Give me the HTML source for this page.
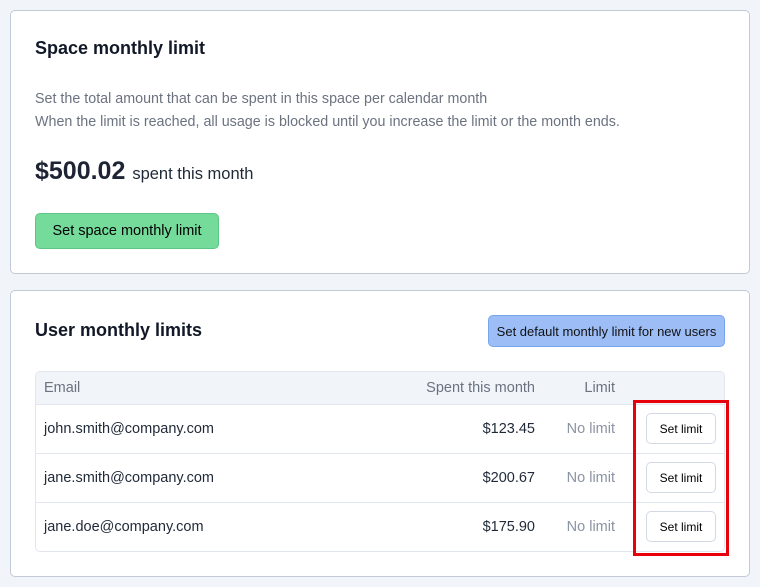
<!DOCTYPE html>
<html><head><style>
*{box-sizing:border-box;margin:0;padding:0}
body{width:760px;height:587px;background:#f1f4f9;font-family:"Liberation Sans",sans-serif;position:relative;overflow:hidden;color:#111827}
.card{position:absolute;left:10px;width:740px;background:#fff;border:1px solid #c3cad7;border-radius:5px}
.abs{position:absolute;white-space:nowrap}
.btn{position:absolute;border-radius:5px;font-size:13px;display:flex;align-items:center;justify-content:center}
.sl{left:646px;width:70px;height:31px;border:1px solid #d3d9e4;background:#fff;font-size:12px;color:#000}
.row{position:absolute;left:35px;width:690px;border-top:1px solid #e2e6ee;height:49px}
.e{font-size:14.5px;color:#1f2937}
.m{font-size:14.5px;color:#1f2937}
.n{font-size:14.5px;color:#8a93a3}
</style></head><body>
<div class="card" style="top:10px;height:264px"></div>
<div class="abs" style="left:35px;top:38px;font-size:18px;font-weight:bold">Space monthly limit</div>
<div class="abs" style="left:35px;top:88px;font-size:14.3px;color:#6b7280;line-height:23px">Set the total amount that can be spent in this space per calendar month<br>When the limit is reached, all usage is blocked until you increase the limit or the month ends.</div>
<div class="abs" style="left:35px;top:157px;font-size:25px;font-weight:bold;color:#1e2433">$500.02 <span style="font-size:16.5px;font-weight:normal;color:#1f2937">spent this month</span></div>
<div class="btn" style="left:35px;top:213px;width:184px;height:36px;background:#74db9a;border:1px solid #5cc684;font-size:14.5px;color:#000">Set space monthly limit</div>

<div class="card" style="top:290px;height:287px"></div>
<div class="abs" style="left:35px;top:320px;font-size:18px;font-weight:bold">User monthly limits</div>
<div class="btn" style="left:488px;top:315px;width:237px;height:32px;background:#9cbdf6;border:1px solid #7aa3ee;font-size:13px;color:#111">Set default monthly limit for new users</div>

<div style="position:absolute;left:35px;top:371px;width:690px;height:181px;border:1px solid #e2e6ee;border-radius:5px;background:#fff"></div>
<div style="position:absolute;left:36px;top:372px;width:688px;height:32px;background:#f1f4f9;border-radius:4px 4px 0 0"></div>
<div class="abs n" style="left:44px;top:380px;color:#6b7280">Email</div>
<div class="abs n" style="right:225px;top:380px;color:#6b7280">Spent this month</div>
<div class="abs n" style="right:145px;top:380px;color:#6b7280">Limit</div>

<div class="row" style="top:404px"></div>
<div class="row" style="top:453px"></div>
<div class="row" style="top:502px"></div>

<div class="abs e" style="left:44px;top:421px">john.smith@company.com</div>
<div class="abs m" style="right:225px;top:421px">$123.45</div>
<div class="abs n" style="right:145px;top:421px">No limit</div>
<div class="btn sl" style="top:413px">Set limit</div>

<div class="abs e" style="left:44px;top:470px">jane.smith@company.com</div>
<div class="abs m" style="right:225px;top:470px">$200.67</div>
<div class="abs n" style="right:145px;top:470px">No limit</div>
<div class="btn sl" style="top:462px">Set limit</div>

<div class="abs e" style="left:44px;top:519px">jane.doe@company.com</div>
<div class="abs m" style="right:225px;top:519px">$175.90</div>
<div class="abs n" style="right:145px;top:519px">No limit</div>
<div class="btn sl" style="top:511px">Set limit</div>

<div style="position:absolute;left:633px;top:400px;width:96px;height:156px;border:3px solid #e8000b"></div>
</body></html>
